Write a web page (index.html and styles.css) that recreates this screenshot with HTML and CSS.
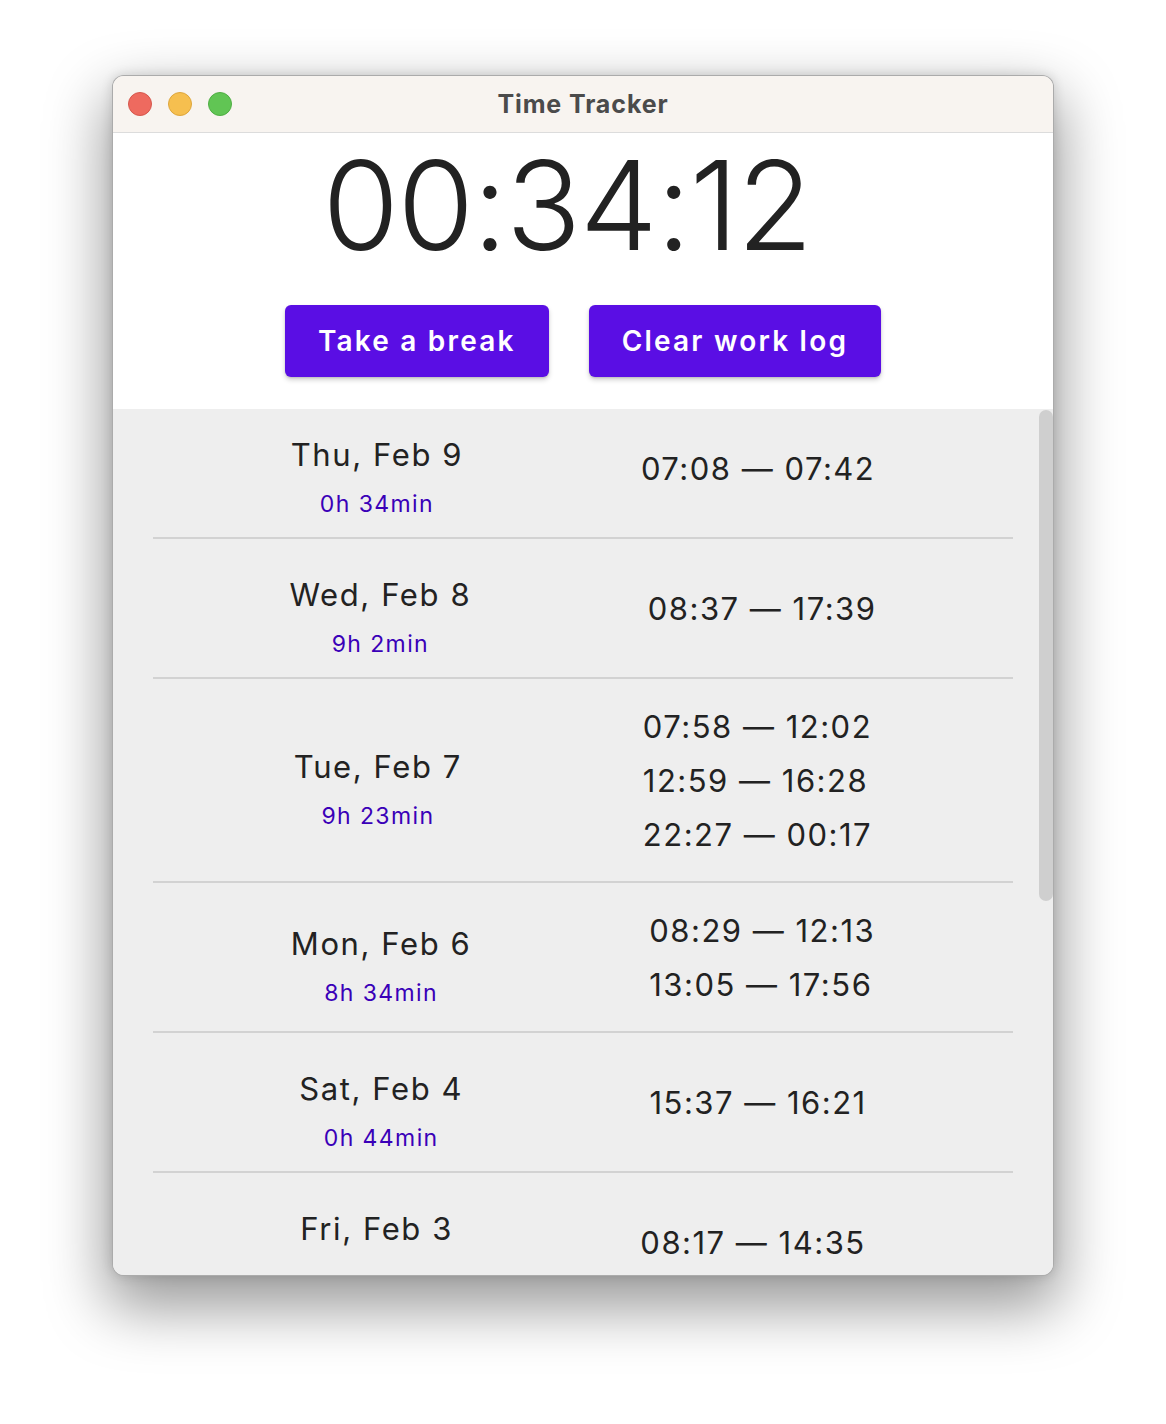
FILE: index.html
```html
<!DOCTYPE html>
<html lang="en">
<head>
<meta charset="utf-8">
<title>Time Tracker</title>
<link rel="stylesheet" href="styles.css">
</head>
<body>
<div class="window">
  <div class="titlebar">
    <div class="lights">
      <span class="light red"></span>
      <span class="light yellow"></span>
      <span class="light green"></span>
    </div>
    <div class="title">Time Tracker</div>
  </div>
  <div class="header">
    <div class="timer">00:34:12</div>
    <div class="actions">
      <button class="btn">Take a break</button>
      <button class="btn">Clear work log</button>
    </div>
  </div>
  <div class="list">
    <div class="row first">
      <div class="day"><div class="date">Thu, Feb 9</div><div class="dur">0h 34min</div></div>
      <div class="times"><div>07:08 — 07:42</div></div>
    </div>
    <div class="divider"></div>
    <div class="row">
      <div class="day"><div class="date">Wed, Feb 8</div><div class="dur">9h 2min</div></div>
      <div class="times"><div>08:37 — 17:39</div></div>
    </div>
    <div class="divider"></div>
    <div class="row">
      <div class="day"><div class="date">Tue, Feb 7</div><div class="dur">9h 23min</div></div>
      <div class="times"><div>07:58 — 12:02</div><div>12:59 — 16:28</div><div>22:27 — 00:17</div></div>
    </div>
    <div class="divider"></div>
    <div class="row">
      <div class="day"><div class="date">Mon, Feb 6</div><div class="dur">8h 34min</div></div>
      <div class="times"><div>08:29 — 12:13</div><div>13:05 — 17:56</div></div>
    </div>
    <div class="divider"></div>
    <div class="row">
      <div class="day"><div class="date">Sat, Feb 4</div><div class="dur">0h 44min</div></div>
      <div class="times"><div>15:37 — 16:21</div></div>
    </div>
    <div class="divider"></div>
    <div class="row">
      <div class="day"><div class="date">Fri, Feb 3</div></div>
      <div class="times"><div>08:17 — 14:35</div></div>
    </div>
    <div class="scrollbar"></div>
  </div>
</div>
</body>
</html>
```
FILE: styles.css
```css
html, body {
  margin: 0;
  padding: 0;
  background: #ffffff;
}
body {
  padding: 75px 0 0 112px;
  min-height: 1424px;
  box-sizing: border-box;
  font-family: Inter, "Noto Sans", sans-serif;
  color: #222222;
}
.window {
  width: 942px;
  height: 1201px;
  box-sizing: border-box;
  border-radius: 12px;
  overflow: hidden;
  border: 1px solid rgba(0,0,0,0.28);
  box-shadow: 0 26px 60px 6px rgba(0,0,0,0.40), 0 0 12px rgba(0,0,0,0.14);
  display: flex;
  flex-direction: column;
  background: #eeeeee;
}
.titlebar {
  height: 56px;
  flex: none;
  background: #f8f4f0;
  border-bottom: 1px solid #dcdcdc;
  display: flex;
  align-items: center;
  position: relative;
}
.lights {
  display: flex;
  gap: 16px;
  padding-left: 15px;
}
.light {
  width: 24px;
  height: 24px;
  border-radius: 50%;
  box-sizing: border-box;
}
.red { background: #ee6a5f; border: 1px solid #d6574d; }
.yellow { background: #f6bf4f; border: 1px solid #dea63c; }
.green { background: #61c554; border: 1px solid #4fae43; }
.title {
  position: absolute;
  left: 0;
  right: 0;
  text-align: center;
  font-size: 25px;
  font-weight: 700;
  color: #4b4b4b;
  letter-spacing: 0.9px;
}
.header {
  flex: none;
  background: #ffffff;
  padding: 10px 0 32px;
  display: flex;
  flex-direction: column;
  align-items: center;
}
.timer {
  font-size: 124px;
  line-height: 124px;
  font-weight: 300;
  color: #222222;
  margin-right: 32px;
  letter-spacing: -1.5px;
}
.actions {
  margin-top: 38px;
  display: flex;
  gap: 40px;
}
.btn {
  height: 72px;
  padding: 0 33px;
  border: none;
  border-radius: 6px;
  background: #5a0ee4;
  color: #ffffff;
  font-family: Inter, "Noto Sans", sans-serif;
  font-size: 28px;
  font-weight: 600;
  letter-spacing: 2.2px;
  box-shadow: 0 3px 5px rgba(0,0,0,0.18), 0 1px 2px rgba(0,0,0,0.12);
}
.list {
  flex: 1;
  position: relative;
  overflow: hidden;
  background: #eeeeee;
}
.row {
  display: flex;
  justify-content: space-evenly;
  align-items: center;
  padding: 19.5px 0;
}
.row.first {
  padding-top: 9.5px;
}
.day {
  height: 99px;
  box-sizing: border-box;
  padding-top: 17px;
  display: flex;
  flex-direction: column;
  align-items: center;
}
.date {
  font-size: 31px;
  line-height: 37px;
  letter-spacing: 1.6px;
  color: #222222;
}
.dur {
  margin-top: 17px;
  font-size: 23px;
  line-height: 28px;
  letter-spacing: 1.4px;
  color: #3a00b8;
}
.times {
  font-size: 31px;
  line-height: 54px;
  letter-spacing: 1.5px;
  color: #222222;
  padding-top: 1px;
}
.divider {
  height: 2px;
  margin: 0 40px;
  background: #d2d2d2;
}
.scrollbar {
  position: absolute;
  top: 1px;
  right: 0;
  width: 14px;
  height: 491px;
  border-radius: 7px;
  background: #cfcfcf;
}
```
